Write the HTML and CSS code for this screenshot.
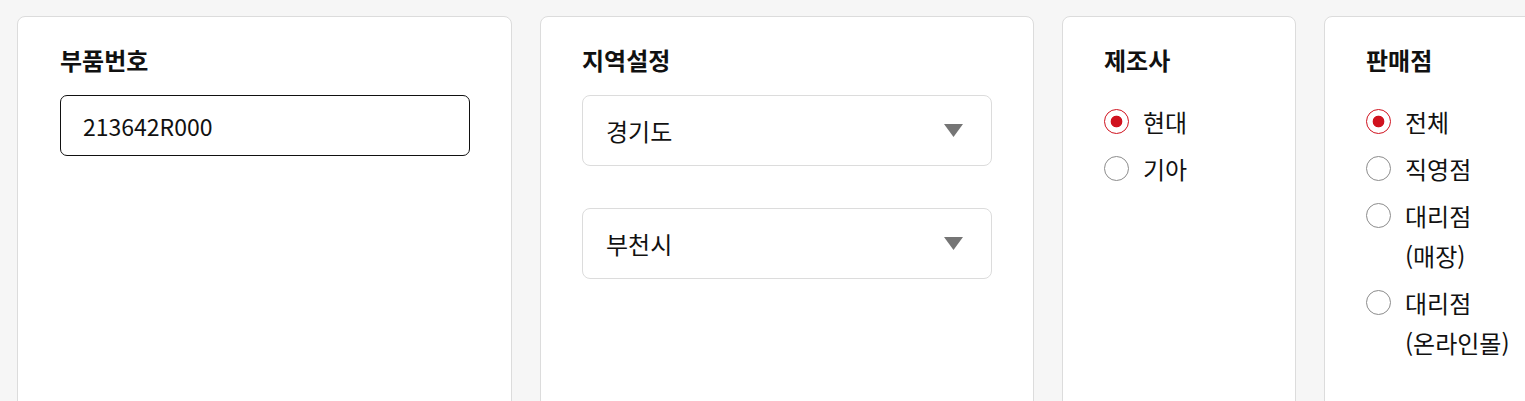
FILE: index.html
```html
<!DOCTYPE html>
<html lang="ko">
<head>
<meta charset="utf-8">
<title>검색 조건</title>
<link rel="stylesheet" href="styles.css">
</head>
<body>
<div class="board">
  <section class="card card-part">
    <h2 class="card-title">부품번호</h2>
    <input class="text-input" type="text" value="213642R000">
  </section>

  <section class="card card-region">
    <h2 class="card-title">지역설정</h2>
    <div class="select">
      <span class="select-value">경기도</span>
      <svg class="select-arrow" width="19" height="13" viewBox="0 0 19 13"><polygon points="0,0 19,0 9.5,13" fill="#757575"/></svg>
    </div>
    <div class="select">
      <span class="select-value">부천시</span>
      <svg class="select-arrow" width="19" height="13" viewBox="0 0 19 13"><polygon points="0,0 19,0 9.5,13" fill="#757575"/></svg>
    </div>
  </section>

  <section class="card card-narrow">
    <h2 class="card-title">제조사</h2>
    <div class="radio-list">
      <label class="radio"><input type="radio" name="maker" checked><span class="radio-label">현대</span></label>
      <label class="radio"><input type="radio" name="maker"><span class="radio-label">기아</span></label>
    </div>
  </section>

  <section class="card card-narrow">
    <h2 class="card-title">판매점</h2>
    <div class="radio-list">
      <label class="radio"><input type="radio" name="shop" checked><span class="radio-label">전체</span></label>
      <label class="radio"><input type="radio" name="shop"><span class="radio-label">직영점</span></label>
      <label class="radio"><input type="radio" name="shop"><span class="radio-label">대리점 (매장)</span></label>
      <label class="radio"><input type="radio" name="shop"><span class="radio-label">대리점 (온라인몰)</span></label>
    </div>
  </section>
</div>
</body>
</html>
```

FILE: styles.css
```css
html, body {
  margin: 0;
  padding: 0;
  overflow: hidden;
  background: #f6f6f6;
  font-family: "Noto Sans CJK KR", "Noto Sans", sans-serif;
  color: #111;
}

.board {
  display: flex;
  gap: 28px;
  padding: 16px 0 0 17px;
  width: max-content;
}

.card {
  flex: none;
  box-sizing: border-box;
  height: 430px;
  background: #fff;
  border: 1px solid #dcdcdc;
  border-radius: 8px;
  padding: 23px 41px 0 41px;
}

.card-part { width: 495px; padding-left: 42px; }
.card-region { width: 494px; }
.card-narrow { width: 234px; }

.card-title {
  margin: 0 0 15px;
  font-size: 24px;
  line-height: 40px;
  font-weight: 700;
  color: #111;
}

.text-input {
  display: block;
  box-sizing: border-box;
  width: 410px;
  height: 61px;
  margin: 0;
  padding: 0 22px;
  border: 1px solid #111;
  border-radius: 7px;
  font-family: inherit;
  font-size: 23px;
  color: #111;
  background: #fff;
  outline: none;
}

.select {
  box-sizing: border-box;
  width: 410px;
  height: 71px;
  display: flex;
  align-items: center;
  justify-content: space-between;
  padding: 0 28px 0 23px;
  border: 1px solid #dcdcdc;
  border-radius: 8px;
  background: #fff;
}

.select + .select { margin-top: 42px; }

.select-value {
  font-size: 24px;
  line-height: 40px;
}

.select-arrow { display: block; }

.radio-list {
  display: flex;
  flex-direction: column;
  gap: 7px;
  margin-top: 22px;
}

.radio {
  display: flex;
  align-items: flex-start;
  gap: 14px;
  cursor: pointer;
}

.radio input {
  appearance: none;
  -webkit-appearance: none;
  flex: none;
  box-sizing: border-box;
  width: 25px;
  height: 25px;
  margin: 7px 0 0;
  border: 1px solid #8c8c8c;
  border-radius: 50%;
  background: #fff;
}

.radio input:checked {
  border-color: #d0121e;
  background: radial-gradient(circle, #d0121e 0 5.5px, #fff 6.2px);
}

.radio-label {
  flex: 1;
  font-size: 24px;
  line-height: 40px;
  word-break: keep-all;
}
```
